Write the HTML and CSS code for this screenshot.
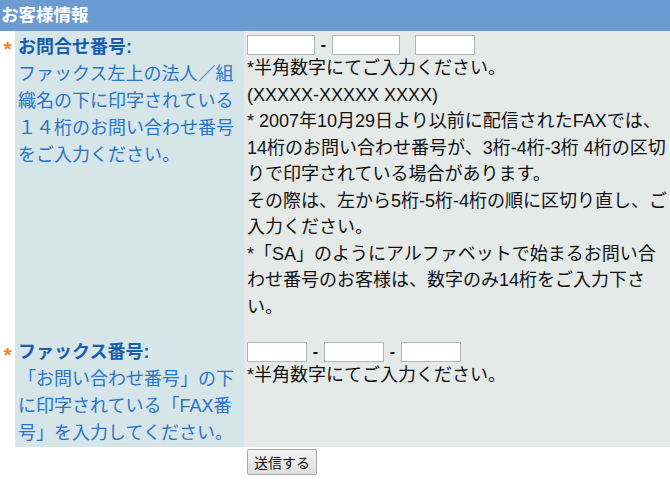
FILE: index.html
```html
<!DOCTYPE html>
<html lang="ja">
<head>
<meta charset="UTF-8">
<title>お客様情報</title>
<link rel="stylesheet" href="styles.css">
</head>
<body>
<form class="form">
  <div class="form-head">お客様情報</div>

  <div class="row row-first">
    <div class="mark">*</div>
    <div class="label">
      <div class="label-title">お問合せ番号:</div>
      <div class="label-note">ファックス左上の法人／組織名の下に印字されている１４桁のお問い合わせ番号をご入力ください。</div>
    </div>
    <div class="field">
      <div class="inputs">
        <input type="text" class="box box-wide">
        <span class="dash">-</span>
        <input type="text" class="box box-wide">
        <input type="text" class="box box-gap">
      </div>
      <div class="note">*半角数字にてご入力ください。<br>(XXXXX-XXXXX XXXX)<br>* 2007年10月29日より以前に配信されたFAXでは、14桁のお問い合わせ番号が、3桁-4桁-3桁 4桁の区切りで印字されている場合があります。<br>その際は、左から5桁-5桁-4桁の順に区切り直し、ご入力ください。<br>*「SA」のようにアルファベットで始まるお問い合わせ番号のお客様は、数字のみ14桁をご入力下さい。</div>
    </div>
  </div>

  <div class="row row-second">
    <div class="mark">*</div>
    <div class="label">
      <div class="label-title">ファックス番号:</div>
      <div class="label-note">「お問い合わせ番号」の下に印字されている「FAX番号」を入力してください。</div>
    </div>
    <div class="field">
      <div class="inputs">
        <input type="text" class="box">
        <span class="dash">-</span>
        <input type="text" class="box">
        <span class="dash">-</span>
        <input type="text" class="box">
      </div>
      <div class="note">*半角数字にてご入力ください。</div>
    </div>
  </div>

  <div class="actions">
    <button type="button" class="submit">送信する</button>
  </div>
</form>
</body>
</html>
```

FILE: styles.css
```css
body {
  margin: 0;
  background: #fff;
  font-family: "Liberation Sans", "Noto Sans CJK JP", sans-serif;
}
.form {
  width: 670px;
  margin: 0;
}
.form-head {
  height: 31px;
  line-height: 30px;
  padding-left: 1px;
  background-color: #6b9bd1;
  color: #fff;
  font-size: 17.5px;
  font-weight: bold;
}
.row {
  display: grid;
  grid-template-columns: 15px 229px 1fr;
}
.mark {
  padding-top: 5px;
  text-align: center;
  color: #e4892a;
  font-size: 21px;
  font-weight: bold;
  line-height: 26px;
  background: #fff;
}
.label {
  background-color: #d5e5e8;
  padding: 3px 3px 0 3px;
  font-size: 18px;
  line-height: 27px;
}
.label-title {
  color: #1a5cb0;
  font-weight: bold;
}
.label-note {
  color: #2b74c6;
}
.field {
  background-color: #e5e9e8;
  padding: 4px 0 0 3px;
  font-size: 18px;
  line-height: 26.5px;
  color: #111;
}
.row-first .field {
  padding-bottom: 16px;
}
.row-second .mark,
.row-second .field {
  padding-top: 6px;
}
.row-second .label {
  padding-top: 3px;
}
.inputs {
  display: flex;
  align-items: center;
  height: 20px;
}
.box {
  box-sizing: border-box;
  width: 60px;
  height: 20px;
  margin: 0;
  border: 1px solid #b5b5b5;
  background: #fff;
}
.box-wide {
  width: 68px;
}
.box-gap {
  margin-left: 15px;
}
.dash {
  width: 17px;
  text-align: center;
  font-size: 16px;
  font-weight: bold;
}
.actions {
  padding: 2px 0 0 247px;
}
.submit {
  height: 26px;
  padding: 0 6px;
  border: 1px solid #a6a6a6;
  border-radius: 2px;
  background: linear-gradient(#f4f4f4, #dedede);
  font-family: "Noto Sans CJK JP", sans-serif;
  font-size: 14px;
  color: #111;
}
```
